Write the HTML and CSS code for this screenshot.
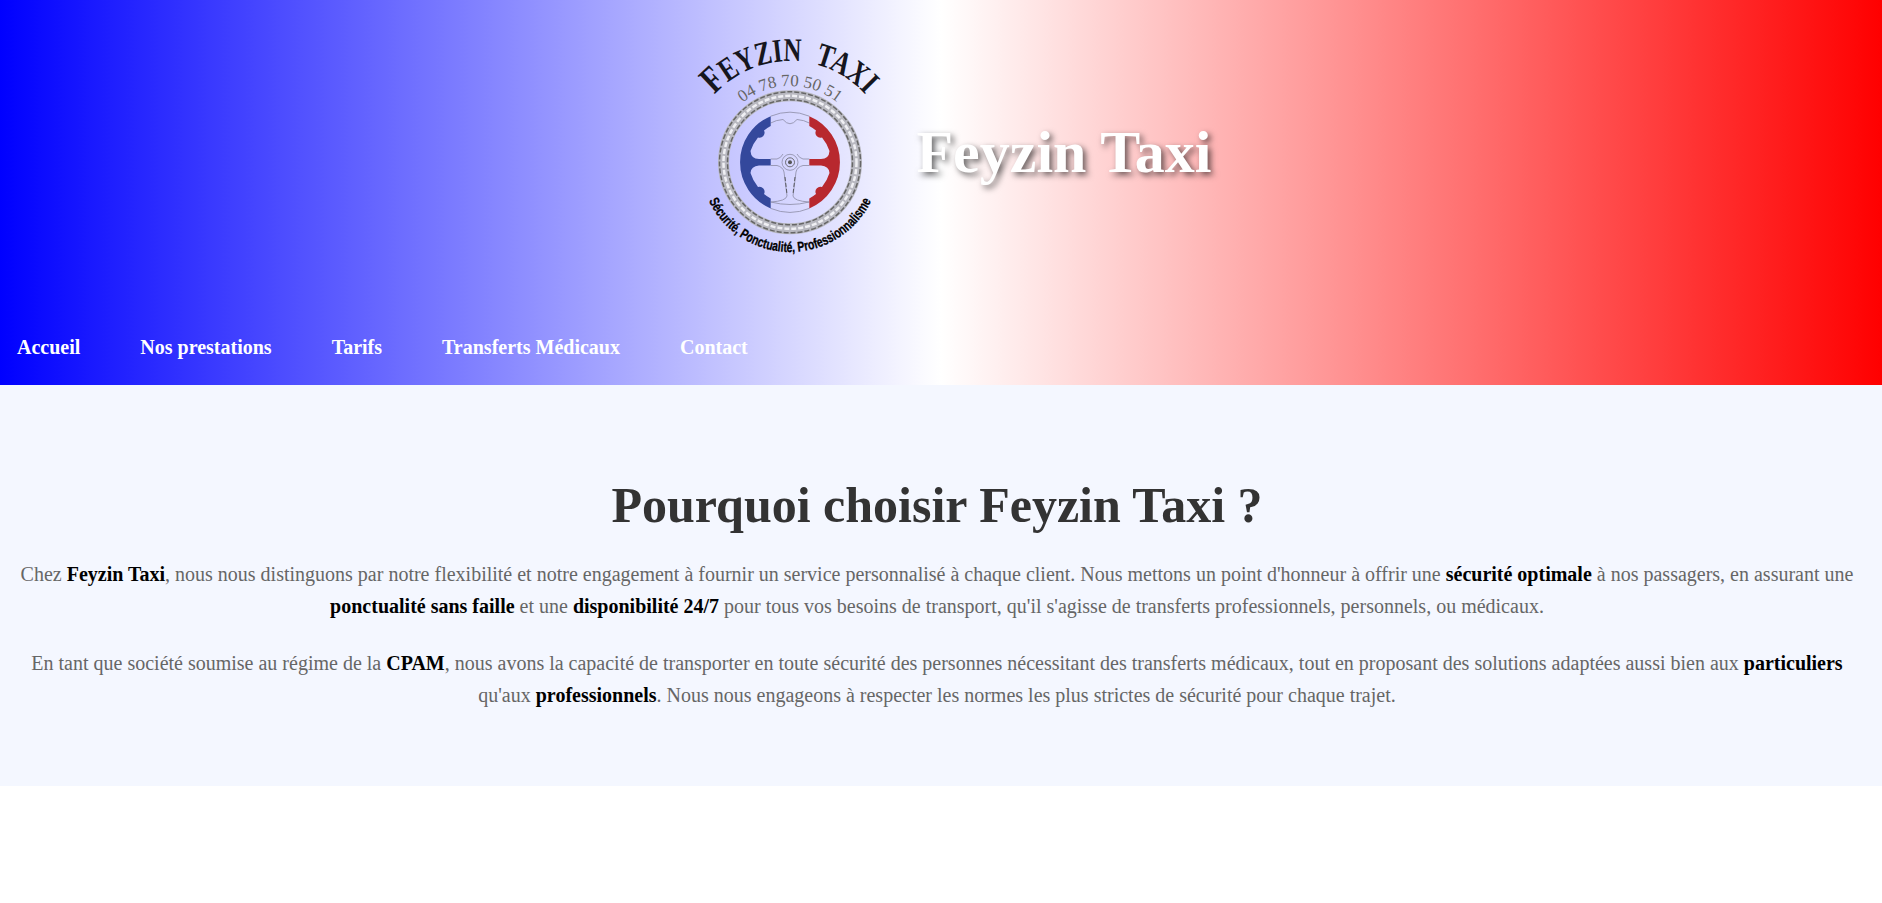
FILE: index.html
```html
<!DOCTYPE html>
<html lang="fr">
<head>
<meta charset="utf-8">
<title>Feyzin Taxi</title>
<link rel="stylesheet" href="styles.css">
</head>
<body>
<header class="site-header">
  <div class="brand">
    <svg class="logo" viewBox="10 0 200 240" width="200" height="240" role="img" aria-label="Logo Feyzin Taxi">
      <defs>
        <path id="arc-top" d="M10 142a101 101 0 0 1 202 0"/>
        <path id="arc-num" d="M35 142a76 76 0 0 1 152 0"/>
        <path id="arc-bot" d="M21 142a90 90 0 0 0 180 0"/>
      </defs>
      <text class="logo-name"><textPath href="#arc-top" startOffset="50%" text-anchor="middle" textLength="170" lengthAdjust="spacingAndGlyphs"><tspan class="logo-cap">F</tspan>EYZIN TAXI</textPath></text>
      <text class="logo-phone"><textPath href="#arc-num" startOffset="50%" text-anchor="middle">04 78 70 50 51</textPath></text>
      <text class="logo-slogan"><textPath href="#arc-bot" startOffset="50%" text-anchor="middle" textLength="202" lengthAdjust="spacingAndGlyphs">Sécurité, Ponctualité, Professionnalisme</textPath></text>
      <circle class="chain-base" cx="111" cy="142.300" r="66.500"/>
      <circle class="chain-outer" cx="111" cy="142.300" r="70.500"/>
      <circle class="chain-inner" cx="111" cy="142.300" r="62.500"/>
      <circle class="chain-mid" cx="111" cy="142.300" r="66.500"/>
      <path class="wheel-line" d="M91.700 96.200A50 50 0 0 1 130.300 96.200M91.700 188.400A50 50 0 0 0 130.300 188.400M91.700 103Q97 100 104 99.500Q111 108 118 99.500Q125 100 130.300 103M91.700 182Q111 187 130.300 182"/>
      <path class="wheel-blue" d="M91.700 96.200V106A41 41 0 0 0 85 110.500A5 5 0 0 1 79 117.500A41 41 0 0 0 71.500 131Q72 139 80 139H91.700V145.500H80Q72 146 71.500 153A41 41 0 0 0 79 167A5 5 0 0 1 85 174A41 41 0 0 0 91.700 178.500V188.400A50 50 0 0 1 91.700 96.200Z"/>
      <path class="wheel-red" d="M130.300 96.200V106A41 41 0 0 1 137 110.500A5 5 0 0 0 143 117.500A41 41 0 0 1 150.500 131Q150 139 142 139H130.300V145.500H142Q150 146 150.500 153A41 41 0 0 1 143 167A5 5 0 0 0 137 174A41 41 0 0 1 130.300 178.500V188.400A50 50 0 0 0 130.300 96.200Z"/>
      <path class="wheel-line" d="M91.700 139H98Q102 138 104 134M130.300 139H124Q120 138 118 134M91.700 145.500H98Q104 147 105 152L108 176Q107 181 92 182M130.300 145.500H124Q118 147 117 152L114 176Q115 181 130 182"/>
      <path class="wheel-dash" d="M106 157L108 174M116 157L114 174"/>
      <circle class="hub-outer" cx="111" cy="142.300" r="8"/>
      <circle class="hub-inner" cx="111" cy="142.300" r="4.500"/>
      <circle class="hub-dot" cx="111" cy="142.300" r="2"/>
    </svg>
    <h1 class="site-title">Feyzin Taxi</h1>
  </div>
  <nav class="main-nav">
    <a href="#">Accueil</a>
    <a href="#">Nos prestations</a>
    <a href="#">Tarifs</a>
    <a href="#">Transferts Médicaux</a>
    <a href="#">Contact</a>
  </nav>
</header>
<main class="why">
  <h2>Pourquoi choisir Feyzin Taxi ?</h2>
  <p>Chez <strong>Feyzin Taxi</strong>, nous nous distinguons par notre flexibilité et notre engagement à fournir un service personnalisé à chaque client. Nous mettons un point d'honneur à offrir une <strong>sécurité optimale</strong> à nos passagers, en assurant une <strong>ponctualité sans faille</strong> et une <strong>disponibilité 24/7</strong> pour tous vos besoins de transport, qu'il s'agisse de transferts professionnels, personnels, ou médicaux.</p>
  <p>En tant que société soumise au régime de la <strong>CPAM</strong>, nous avons la capacité de transporter en toute sécurité des personnes nécessitant des transferts médicaux, tout en proposant des solutions adaptées aussi bien aux <strong>particuliers</strong> qu'aux <strong>professionnels</strong>. Nous nous engageons à respecter les normes les plus strictes de sécurité pour chaque trajet.</p>
</main>
</body>
</html>
```
FILE: styles.css
```css
* { box-sizing: border-box; }
body {
  margin: 0;
  font-family: "Liberation Serif", "Times New Roman", serif;
  background: #fff;
}
.site-header {
  height: 385px;
  background: linear-gradient(to right, #00f, #fff, #f00);
  display: flex;
  flex-direction: column;
}
.brand {
  display: flex;
  align-items: flex-start;
  justify-content: center;
  gap: 27px;
  padding: 20px 0 0 19px;
  height: 328px;
}
.logo { flex: none; display: block; }
.logo text { font-family: "Liberation Serif", serif; }
.logo-name { font-size: 33px; font-weight: 700; fill: #16161e; word-spacing: 10px; }
.logo-cap { font-size: 38px; }
.logo-phone { font-size: 17px; fill: #666; }
.logo .logo-slogan { font-size: 14px; font-weight: 700; fill: #000; stroke: #000; stroke-width: 0.300; font-family: "Liberation Sans", sans-serif; }
.chain-base { fill: none; stroke: #b8b8c0; stroke-width: 11; }
.chain-outer { fill: none; stroke: #666; stroke-width: 1.500; stroke-dasharray: 5 2; }
.chain-inner { fill: none; stroke: #666; stroke-width: 1.500; stroke-dasharray: 5 2; }
.chain-mid { fill: none; stroke: #f0f0f4; stroke-width: 2.500; stroke-dasharray: 5 2; }
.wheel-line { fill: none; stroke: #8c8ca4; stroke-width: 0.800; }
.wheel-dash { fill: none; stroke: #444; stroke-width: 0.800; stroke-dasharray: 4 2; }
.wheel-blue { fill: #34489c; }
.wheel-red { fill: #b8282e; }
.hub-outer { fill: none; stroke: #8c8ca4; stroke-width: 0.800; }
.hub-inner { fill: none; stroke: #555; stroke-width: 0.800; }
.hub-dot { fill: #555; }
.site-title {
  margin: 102px 0 0;
  font-size: 60px;
  line-height: 1;
  font-weight: 700;
  color: #fff;
  text-shadow: 3px 3px 6px rgba(0, 0, 0, 0.6);
}
.main-nav {
  display: flex;
  gap: 60px;
  padding-left: 17px;
}
.main-nav a {
  color: #fff;
  font-size: 20px;
  line-height: 38px;
  font-weight: 700;
  text-decoration: none;
}
.why {
  height: 401px;
  padding: 91px 16px 0 8px;
  background: #f4f7ff;
  text-align: center;
}
.why h2 {
  margin: 0 0 24px;
  font-size: 50px;
  line-height: 58px;
  color: #333;
}
.why p {
  margin: 0 0 25px;
  font-size: 20px;
  line-height: 32px;
  color: #666;
}
.why strong { color: #000; }
```
